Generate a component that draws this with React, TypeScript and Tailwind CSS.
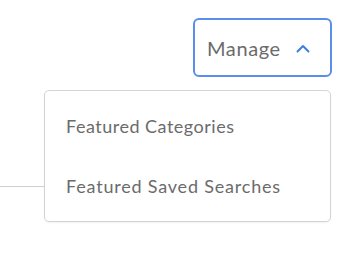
export default function App() {
  return (
    <div className="relative h-[255px] w-[353px] bg-white font-['Lato',sans-serif]">
      <div className="flex justify-end pr-[21px] pt-[18px]">
        <button className="flex h-[59px] w-[139px] items-center gap-[15px] rounded-[6px] border-2 border-[#5b8def] pl-[12px] text-[20px] tracking-[0.6px] text-[#6b6b6b]">
          <span className="leading-none">Manage</span>
          <svg width="14" height="9" viewBox="0 0 14 9" fill="none" className="mt-[1px]">
            <path d="M1.5 7.5l5.5-5.5 5.5 5.5" stroke="#3b7de9" strokeWidth="2" strokeLinecap="round" strokeLinejoin="round" />
          </svg>
        </button>
      </div>
      <div className="mt-[13px] flex items-center">
        <div className="mb-[35px] h-px w-[44px] self-end bg-[#cfcfcf]" />
        <div className="flex h-[132px] w-[287px] flex-col justify-center gap-[33px] rounded-[5px] border border-[#d4d4d4] pl-[21px] text-[18px] tracking-[0.5px] text-[#6b6b6b] shadow-[0_1px_2px_rgba(0,0,0,0.06)]">
          <div>Featured Categories</div>
          <div className="tracking-[0.8px]">Featured Saved Searches</div>
        </div>
      </div>
    </div>
  );
}
